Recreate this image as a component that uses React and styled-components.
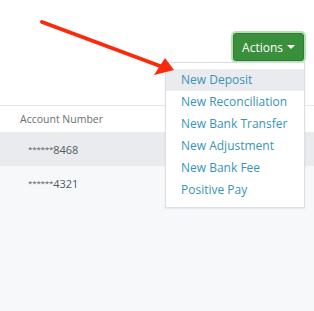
import React from "react";
import styled, { createGlobalStyle } from "styled-components";

const GlobalStyle = createGlobalStyle`
  html, body {
    margin: 0;
    padding: 0;
    background: #f7f8fa;
    font-family: "Open Sans", "Liberation Sans", sans-serif;
  }
`;

const actions = [
  "New Deposit",
  "New Reconciliation",
  "New Bank Transfer",
  "New Adjustment",
  "New Bank Fee",
  "Positive Pay",
];

const accounts = ["8468", "4321"];

export default function App() {
  return (
    <Page>
      <GlobalStyle />
      <TopBar>
        <ActionsWrap>
          <ActionsButton>
            Actions <Caret />
          </ActionsButton>
          <Menu>
            {actions.map((a, i) => (
              <MenuItem key={a} active={i === 0}>
                {a}
              </MenuItem>
            ))}
          </Menu>
        </ActionsWrap>
        <Arrow width="180" height="80" viewBox="0 0 180 80">
          <line x1="42" y1="22" x2="160" y2="66" stroke="#fa2a0a" strokeWidth="4" strokeLinecap="round" />
          <polygon points="174,70 154,75 165,58" fill="#fa2a0a" />
        </Arrow>
      </TopBar>
      <Table>
        <HeadRow>
          <HeadCell>Account Number</HeadCell>
        </HeadRow>
        {accounts.map((n, i) => (
          <Row key={n} shaded={i === 0}>
            <Cell>
              <Mask>******</Mask>
              {n}
            </Cell>
          </Row>
        ))}
      </Table>
    </Page>
  );
}

const Page = styled.div`
  width: 314px;
  min-height: 311px;
  background: #f7f8fa;
`;

const TopBar = styled.div`
  position: relative;
  height: 106px;
  background: #fff;
  border-bottom: 1px solid #e6e7e9;
  display: flex;
  justify-content: flex-end;
  align-items: flex-start;
  padding: 33px 10px 0 0;
  box-sizing: border-box;
`;

const ActionsWrap = styled.div`
  position: relative;
`;

const ActionsButton = styled.button`
  display: flex;
  align-items: center;
  gap: 3px;
  height: 28px;
  padding: 0 8px;
  border: 1px solid #2f7f31;
  border-radius: 3px;
  background: #3a8f3c;
  color: #fff;
  font-family: inherit;
  font-size: 12px;
  box-shadow: 0 0 0 2px #b7e0b4;
  cursor: pointer;
`;

const Caret = styled.span`
  width: 0;
  height: 0;
  border-left: 4px solid transparent;
  border-right: 4px solid transparent;
  border-top: 4px solid #fff;
  margin-left: 1px;
`;

const Menu = styled.div`
  position: absolute;
  top: 29px;
  right: -1px;
  width: 140px;
  box-sizing: border-box;
  padding: 6px 0 6px;
  background: #fff;
  border: 1px solid #dcdfe3;
  box-shadow: 0 1px 2px rgba(0, 0, 0, 0.08);
  z-index: 2;
`;

const MenuItem = styled.div`
  height: 22px;
  line-height: 22px;
  padding: 0 15px;
  font-size: 12px;
  color: #3a93b5;
  white-space: nowrap;
  background: ${(p) => (p.active ? "#e9ebee" : "transparent")};
`;

const Arrow = styled.svg`
  position: absolute;
  left: 0;
  top: 0;
  z-index: 3;
`;

const Table = styled.div`
  display: flex;
  flex-direction: column;
`;

const HeadRow = styled.div`
  height: 26px;
  display: flex;
  align-items: center;
  background: #fff;
  padding-left: 20px;
`;

const HeadCell = styled.span`
  font-size: 10.5px;
  color: #6b6f73;
`;

const Row = styled.div`
  height: 34px;
  display: flex;
  align-items: center;
  padding-left: 28px;
  background: ${(p) => (p.shaded ? "#e9ebee" : "#f7f8fa")};
`;

const Cell = styled.span`
  font-size: 11px;
  color: #555a5e;
`;

const Mask = styled.span`
  font-size: 8px;
  letter-spacing: -0.2px;
  vertical-align: 2px;
`;
